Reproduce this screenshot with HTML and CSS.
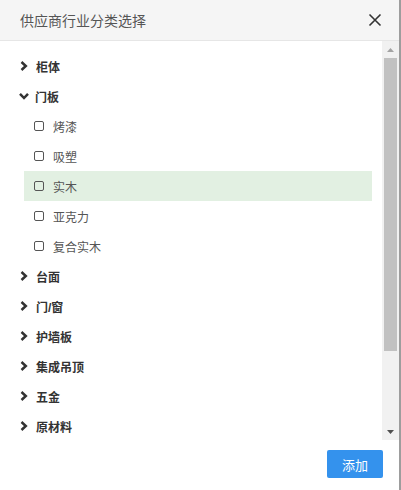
FILE: index.html
```html
<!DOCTYPE html>
<html lang="zh-CN">
<head>
    <meta charset="UTF-8">
    <meta name="viewport" content="width=device-width, initial-scale=1.0">
    <title>供应商行业分类选择</title>
    <link rel="stylesheet" href="styles.css">
</head>
<body>

    <section class="dialog">
        <div class="dialog-header">
            <span class="dialog-title">供应商行业分类选择</span>
            <svg class="close" width="14" height="14" viewBox="0 0 14 14">
                <path d="M1.5 1.5 L12.5 12.5 M12.5 1.5 L1.5 12.5" stroke="#333" stroke-width="1.6" fill="none"/>
            </svg>
        </div>

        <div class="dialog-body">
            <ul class="tree">
                <li class="node">
                    <div class="node-row">
                        <svg class="arrow" width="8" height="10" viewBox="0 0 8 10"><path d="M1.5 1 L5.8 5 L1.5 9" stroke="#333" stroke-width="2.5" fill="none"/></svg>
                        <span>柜体</span>
                    </div>
                </li>
                <li class="node">
                    <div class="node-row">
                        <svg class="arrow down" width="10" height="8" viewBox="0 0 10 8"><path d="M1 1.8 L5 6 L9 1.8" stroke="#333" stroke-width="2.5" fill="none"/></svg>
                        <span>门板</span>
                    </div>
                    <ul class="children">
                        <li class="leaf"><i class="box"></i><span>烤漆</span></li>
                        <li class="leaf"><i class="box"></i><span>吸塑</span></li>
                        <li class="leaf selected"><i class="box"></i><span>实木</span></li>
                        <li class="leaf"><i class="box"></i><span>亚克力</span></li>
                        <li class="leaf"><i class="box"></i><span>复合实木</span></li>
                    </ul>
                </li>
                <li class="node">
                    <div class="node-row">
                        <svg class="arrow" width="8" height="10" viewBox="0 0 8 10"><path d="M1.5 1 L5.8 5 L1.5 9" stroke="#333" stroke-width="2.5" fill="none"/></svg>
                        <span>台面</span>
                    </div>
                </li>
                <li class="node">
                    <div class="node-row">
                        <svg class="arrow" width="8" height="10" viewBox="0 0 8 10"><path d="M1.5 1 L5.8 5 L1.5 9" stroke="#333" stroke-width="2.5" fill="none"/></svg>
                        <span>门/窗</span>
                    </div>
                </li>
                <li class="node">
                    <div class="node-row">
                        <svg class="arrow" width="8" height="10" viewBox="0 0 8 10"><path d="M1.5 1 L5.8 5 L1.5 9" stroke="#333" stroke-width="2.5" fill="none"/></svg>
                        <span>护墙板</span>
                    </div>
                </li>
                <li class="node">
                    <div class="node-row">
                        <svg class="arrow" width="8" height="10" viewBox="0 0 8 10"><path d="M1.5 1 L5.8 5 L1.5 9" stroke="#333" stroke-width="2.5" fill="none"/></svg>
                        <span>集成吊顶</span>
                    </div>
                </li>
                <li class="node">
                    <div class="node-row">
                        <svg class="arrow" width="8" height="10" viewBox="0 0 8 10"><path d="M1.5 1 L5.8 5 L1.5 9" stroke="#333" stroke-width="2.5" fill="none"/></svg>
                        <span>五金</span>
                    </div>
                </li>
                <li class="node">
                    <div class="node-row">
                        <svg class="arrow" width="8" height="10" viewBox="0 0 8 10"><path d="M1.5 1 L5.8 5 L1.5 9" stroke="#333" stroke-width="2.5" fill="none"/></svg>
                        <span>原材料</span>
                    </div>
                </li>
            </ul>

            <!-- fake scrollbar, same look as the old windows one -->
            <div class="scrollbar">
                <div class="sb-btn">
                    <svg width="7" height="4" viewBox="0 0 7 4"><path d="M0 4 L3.5 0 L7 4 Z" fill="#a3a3a3"/></svg>
                </div>
                <div class="sb-track">
                    <div class="sb-thumb"></div>
                </div>
                <div class="sb-btn">
                    <svg width="7" height="4" viewBox="0 0 7 4"><path d="M0 0 L3.5 4 L7 0 Z" fill="#505050"/></svg>
                </div>
            </div>
        </div>

        <div class="dialog-footer">
            <button class="btn-add">添加</button>
        </div>
    </section>

    <div class="edge"></div>

</body>
</html>
```

FILE: styles.css
```css
* {
    margin: 0;
    padding: 0;
    box-sizing: border-box;
    font-family: "Liberation Sans", "Noto Sans CJK SC", sans-serif;
}

body {
    background-color: #fff;
    display: flex;
    height: 490px;
    overflow: hidden;
}

.dialog {
    width: 399px;
    height: 490px;
    display: flex;
    flex-direction: column;
    background: #fff;
}

.edge {
    width: 2px;
    background: #9d9d9d;
}

.dialog-header {
    height: 41px;
    flex-shrink: 0;
    background: #f5f5f5;
    border-bottom: 1px solid #e6e6e6;
    display: flex;
    align-items: center;
    justify-content: space-between;
    padding: 0 17px 0 20px;
}

.dialog-title {
    font-size: 14px;
    color: #555;
}

.close {
    display: block;
}

.dialog-body {
    height: 399px;
    flex-shrink: 0;
    display: flex;
}

.tree {
    flex: 1;
    list-style: none;
    overflow: hidden;
    padding: 10px 10px 0 10px;
}

.node-row {
    height: 30px;
    display: flex;
    align-items: center;
    padding-left: 10px;
    font-size: 12px;
    font-weight: bold;
    color: #333;
}

.node-row .arrow {
    display: block;
    margin-right: 8px;
}

.node-row .arrow.down {
    margin-left: -1px;
    margin-right: 6px;
}

.children {
    list-style: none;
    margin-left: 14px;
}

.leaf {
    height: 30px;
    display: flex;
    align-items: center;
    padding-left: 10px;
    font-size: 12px;
    color: #555;
}

.leaf.selected {
    background: #e2f0e2;
}

.box {
    width: 10px;
    height: 10px;
    border: 1px solid #555;
    border-radius: 2px;
    margin-right: 9px;
}

.scrollbar {
    width: 17px;
    flex-shrink: 0;
    background: #f1f1f1;
    display: flex;
    flex-direction: column;
}

.sb-btn {
    height: 17px;
    display: flex;
    align-items: center;
    justify-content: center;
}

.sb-track {
    flex: 1;
    padding: 0 2px;
}

.sb-thumb {
    height: 293px;
    background: #c1c1c1;
}

.dialog-footer {
    flex: 1;
    display: flex;
    justify-content: flex-end;
    align-items: flex-start;
    padding: 10px 16px 0 0;
}

.btn-add {
    width: 56px;
    height: 28px;
    border: none;
    border-radius: 2px;
    background: #3492ed;
    color: #fff;
    font-size: 13px;
}
```
